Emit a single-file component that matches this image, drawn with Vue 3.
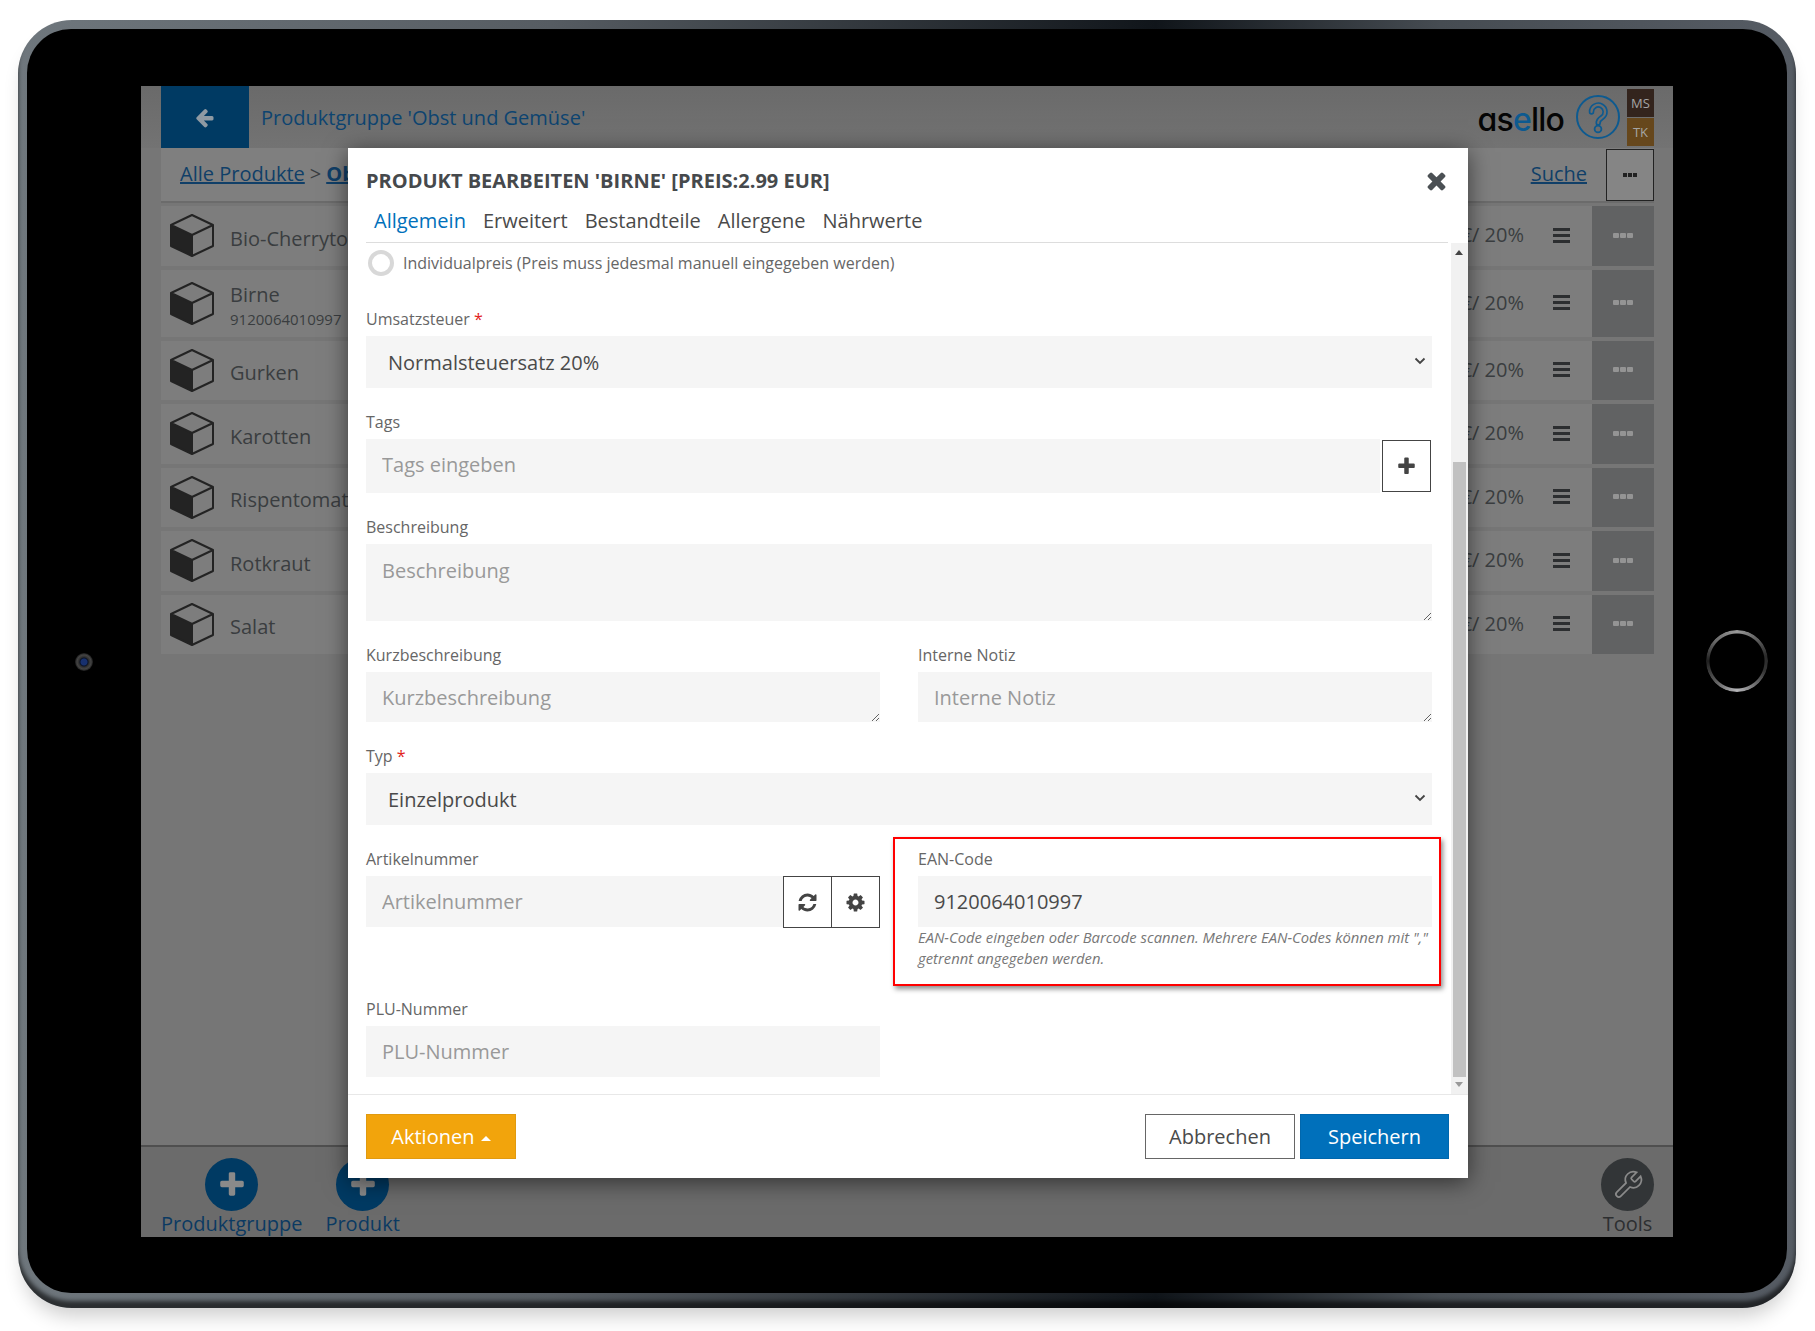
<template>
  <div class="page">
    <div class="device">
      <div class="bezel">
        <span class="camera"></span>
        <span class="home"></span>

        <div class="screen">
          <header class="top">
            <a class="back">
              <svg viewBox="0 0 1792 1792"><path :d="icons.arrow" /></svg>
            </a>
            <div class="top-title">Produktgruppe 'Obst und Gemüse'</div>
            <div class="logo">as<span>e</span>llo</div>
            <svg class="help" viewBox="0 0 44 44">
              <circle cx="22" cy="22" r="21" fill="none" stroke="#0d5a90" stroke-width="2" />
              <path d="M15.5 17a6.8 6.8 0 1 1 10.4 5.6c-2.6 1.6-3.7 3-3.7 5.4" fill="none" stroke="#0d5a90" stroke-width="5.5" stroke-linecap="round" />
              <path d="M15.5 17a6.8 6.8 0 1 1 10.4 5.6c-2.6 1.6-3.7 3-3.7 5.4" fill="none" stroke="#6d6d6d" stroke-width="2.2" stroke-linecap="round" />
              <circle cx="22" cy="34" r="3.4" fill="#6d6d6d" stroke="#0d5a90" stroke-width="1.8" />
            </svg>
            <div class="users">
              <span class="ms">MS</span>
              <span class="tk">TK</span>
            </div>
          </header>

          <div class="crumb">
            <a class="link">Alle Produkte</a>
            <span class="sep">&gt;</span>
            <a class="link strong">Obst und Gemüse</a>
            <a class="link search">Suche</a>
            <button class="more"><i></i><i></i><i></i></button>
          </div>

          <div class="list">
            <div v-for="p in products" :key="p.name" class="row" :class="{ tall: p.code }">
              <svg class="cube" viewBox="0 0 44 43">
                <path d="M1 11 22 21V42L1 32Z" fill="#232323" />
                <path d="M22 1 43 11V32L22 42 1 32V11ZM1 11 22 21 43 11M22 21V42" fill="none" stroke="#232323" stroke-width="2" stroke-linejoin="round" />
              </svg>
              <div class="row-name">
                <div>{{ p.name }}</div>
                <small v-if="p.code">{{ p.code }}</small>
              </div>
              <div class="row-price">{{ p.price }} €/ 20%</div>
              <div class="row-bars"><i></i><i></i><i></i></div>
              <div class="row-action"><i></i><i></i><i></i></div>
            </div>
          </div>

          <footer class="bottom">
            <div class="tool">
              <span class="round">
                <svg viewBox="0 0 1792 1792"><path :d="icons.plus" /></svg>
              </span>
              <span>Produktgruppe</span>
            </div>
            <div class="tool">
              <span class="round">
                <svg viewBox="0 0 1792 1792"><path :d="icons.plus" /></svg>
              </span>
              <span>Produkt</span>
            </div>
            <div class="tool dark">
              <span class="round">
                <svg class="wrench" viewBox="0 0 24 24"><path d="M14.7 6.3a1 1 0 0 0 0 1.4l1.6 1.6a1 1 0 0 0 1.4 0l3.77-3.77a6 6 0 0 1-7.94 7.94l-6.91 6.91a2.12 2.12 0 0 1-3-3l6.91-6.91a6 6 0 0 1 7.94-7.94l-3.76 3.76z" /></svg>
              </span>
              <span>Tools</span>
            </div>
          </footer>

          <div class="modal">
            <div class="modal-head">
              <h3>PRODUKT BEARBEITEN 'BIRNE' [PREIS:2.99 EUR]</h3>
              <svg class="close" viewBox="0 0 1792 1792"><path :d="icons.times" /></svg>
            </div>
            <nav class="tabs">
              <a v-for="(t, i) in tabs" :key="t" :class="{ active: i === 0 }">{{ t }}</a>
            </nav>

            <div class="modal-body">
              <form class="form" @submit.prevent>
                <div class="radio-row">
                  <span class="radio"></span>
                  <span>Individualpreis (Preis muss jedesmal manuell eingegeben werden)</span>
                </div>

                <div class="field">
                  <label>Umsatzsteuer <b>*</b></label>
                  <div class="select">
                    <select><option>Normalsteuersatz 20%</option></select>
                    <svg viewBox="0 0 12 8"><path d="M1.5 1.5 6 6l4.5-4.5" /></svg>
                  </div>
                </div>

                <div class="field">
                  <label>Tags</label>
                  <div class="group tags">
                    <input placeholder="Tags eingeben" />
                    <button class="addon wide">
                      <svg viewBox="0 0 1792 1792"><path :d="icons.plus" /></svg>
                    </button>
                  </div>
                </div>

                <div class="field">
                  <label>Beschreibung</label>
                  <textarea class="big" placeholder="Beschreibung"></textarea>
                </div>

                <div class="cols">
                  <div class="field">
                    <label>Kurzbeschreibung</label>
                    <textarea placeholder="Kurzbeschreibung"></textarea>
                  </div>
                  <div class="field">
                    <label>Interne Notiz</label>
                    <textarea placeholder="Interne Notiz"></textarea>
                  </div>
                </div>

                <div class="field">
                  <label>Typ <b>*</b></label>
                  <div class="select">
                    <select><option>Einzelprodukt</option></select>
                    <svg viewBox="0 0 12 8"><path d="M1.5 1.5 6 6l4.5-4.5" /></svg>
                  </div>
                </div>

                <div class="cols">
                  <div class="field">
                    <label>Artikelnummer</label>
                    <div class="group">
                      <input placeholder="Artikelnummer" />
                      <button class="addon">
                        <svg viewBox="0 0 1792 1792"><path :d="icons.refresh" /></svg>
                      </button>
                      <button class="addon next">
                        <svg viewBox="0 0 1792 1792"><path :d="icons.cog" /></svg>
                      </button>
                    </div>
                  </div>
                  <div class="field ean">
                    <span class="mark"></span>
                    <label>EAN-Code</label>
                    <input value="9120064010997" />
                    <p class="hint">EAN-Code eingeben oder Barcode scannen. Mehrere EAN-Codes können mit "," getrennt angegeben werden.</p>
                  </div>
                </div>

                <div class="cols plu">
                  <div class="field">
                    <label>PLU-Nummer</label>
                    <input placeholder="PLU-Nummer" />
                  </div>
                </div>
              </form>

              <div class="scrollbar">
                <i class="up"></i>
                <span class="thumb"></span>
                <i class="down"></i>
              </div>
            </div>

            <div class="modal-foot">
              <button class="btn orange">Aktionen <i class="caret"></i></button>
              <button class="btn plain">Abbrechen</button>
              <button class="btn blue">Speichern</button>
            </div>
          </div>
        </div>
      </div>
    </div>
  </div>
</template>

<script setup>
const products = [
  { name: 'Bio-Cherrytomaten', price: '3.49' },
  { name: 'Birne', code: '9120064010997', price: '2.99' },
  { name: 'Gurken', price: '1.29' },
  { name: 'Karotten', price: '1.49' },
  { name: 'Rispentomaten', price: '2.79' },
  { name: 'Rotkraut', price: '1.19' },
  { name: 'Salat', price: '0.99' }
]

const tabs = ['Allgemein', 'Erweitert', 'Bestandteile', 'Allergene', 'Nährwerte']

const icons = {
  arrow: 'M1664 896v128q0 53-32.5 90.5t-84.5 37.5h-704l293 294q38 36 38 90t-38 90l-75 76q-37 37-90 37-52 0-91-37l-651-652q-37-37-37-90 0-52 37-91l651-650q38-38 91-38 52 0 90 38l75 74q38 38 38 91t-38 91l-293 293h704q52 0 84.5 37.5t32.5 90.5z',
  plus: 'M1600 736v192q0 40-28 68t-68 28h-416v416q0 40-28 68t-68 28h-192q-40 0-68-28t-28-68v-416h-416q-40 0-68-28t-28-68v-192q0-40 28-68t68-28h416v-416q0-40 28-68t68-28h192q40 0 68 28t28 68v416h416q40 0 68 28t28 68z',
  times: 'M1490 1322q0 40-28 68l-136 136q-28 28-68 28t-68-28l-294-294-294 294q-28 28-68 28t-68-28l-136-136q-28-28-28-68t28-68l294-294-294-294q-28-28-28-68t28-68l136-136q28-28 68-28t68 28l294 294 294-294q28-28 68-28t68 28l136 136q28 28 28 68t-28 68l-294 294 294 294q28 28 28 68z',
  refresh: 'M1639 1056q0 5-1 7-64 268-268 434.5t-478 166.5q-146 0-282.5-55t-243.5-157l-129 129q-19 19-45 19t-45-19-19-45v-448q0-26 19-45t45-19h448q26 0 45 19t19 45-19 45l-137 137q71 66 161 102t187 36q134 0 250-65t186-179q11-17 53-117 8-23 30-23h192q13 0 22.5 9.5t9.5 22.5zm25-800v448q0 26-19 45t-45 19h-448q-26 0-45-19t-19-45 19-45l138-138q-148-137-349-137-134 0-250 65t-186 179q-11 17-53 117-8 23-30 23h-199q-13 0-22.5-9.5t-9.5-22.5v-7q65-268 270-434.5t480-166.5q146 0 284 55.5t245 156.5l130-129q19-19 45-19t45 19 19 45z',
  cog: 'M1152 896q0-106-75-181t-181-75-181 75-75 181 75 181 181 75 181-75 75-181zm512-109v222q0 12-8 23t-20 13l-185 28q-19 54-39 91 35 50 107 138 10 12 10 25t-9 23q-27 37-99 108t-94 71q-12 0-26-9l-138-108q-44 23-91 38-16 136-29 186-7 28-36 28h-222q-14 0-24.5-8.5t-11.5-21.5l-28-184q-49-16-90-37l-141 107q-10 9-25 9-14 0-25-11-126-114-165-168-7-10-7-23 0-12 8-23 15-21 51-66.5t54-70.5q-27-50-41-99l-183-27q-13-2-21-12.5t-8-23.5v-222q0-12 8-23t19-13l186-28q14-46 39-92-40-57-107-138-10-12-10-24 0-10 9-23 26-36 98.5-107.5t94.5-71.5q13 0 26 10l138 107q44-23 91-38 16-136 29-186 7-28 36-28h222q14 0 24.5 8.5t11.5 21.5l28 184q49 16 90 37l142-107q9-9 24-9 13 0 25 10 129 119 165 170 7 8 7 22 0 12-8 23-15 21-51 66.5t-54 70.5q26 50 41 98l183 28q13 2 21 12.5t8 23.5z'
}
</script>

<style>
html, body {
  background: #fff;
  overflow: hidden;
}
</style>

<style scoped>
.page {
  width: 1815px;
  height: 1331px;
  padding: 20px 19px 23px 18px;
  box-sizing: border-box;
  background: #fff;
  font-family: "Open Sans", sans-serif;
  overflow: hidden;
}

.device {
  height: 1288px;
  padding: 9px 9px 15px;
  box-sizing: border-box;
  border-radius: 54px;
  background: linear-gradient(90deg, #6f777d 0, #565c62 30%, #10151a 64%, #464c52 80%, #565c64 100%);
  box-shadow: inset 0 -7px 4px rgba(0, 0, 0, .6), 0 14px 20px -6px rgba(0, 0, 0, .2);
}

.bezel {
  position: relative;
  height: 100%;
  padding: 57px 114px 56px;
  box-sizing: border-box;
  border-radius: 44px;
  background: #000;
}

.camera {
  position: absolute;
  left: 48px;
  top: 624px;
  width: 18px;
  height: 18px;
  border-radius: 50%;
  background: radial-gradient(circle, #17306e 0 3px, #0a1226 4px, #2e2e2e 5px, #444 7px, #1a1a1a 9px);
}

.home {
  position: absolute;
  left: 1679px;
  top: 601px;
  width: 62px;
  height: 62px;
  border-radius: 50%;
  background: conic-gradient(#9a9a9a, #2a2a2a 80deg, #333 110deg, #b5b5b8 180deg, #555 230deg, #1f1f1f 270deg, #666 310deg, #9a9a9a);
  -webkit-mask: radial-gradient(closest-side, transparent 27px, #000 28px);
  mask: radial-gradient(closest-side, transparent 27px, #000 28px);
}

/* screen, dimmed by the dialog */
.screen {
  position: relative;
  display: flex;
  flex-direction: column;
  height: 100%;
  background: #767676;
  color: #3a3d40;
  overflow: hidden;
}

.top {
  display: flex;
  align-items: center;
  flex: 0 0 62px;
  padding: 0 19px 0 20px;
  background: linear-gradient(#6a6a6a, #737373);
}

.back {
  display: flex;
  align-items: center;
  justify-content: center;
  width: 88px;
  height: 62px;
  background: #003a63;
}

.back svg {
  width: 21px;
  margin-left: -2px;
  fill: #8f9aa3;
}

.top-title {
  flex: 1;
  margin-left: 12px;
  font-size: 20px;
  color: #0d4470;
}

.logo {
  margin-right: 12px;
  padding-top: 5px;
  font-family: Inter, sans-serif;
  font-feature-settings: "cv11";
  font-size: 32px;
  font-weight: 500;
  letter-spacing: -.8px;
  color: #050505;
}

.logo span {
  color: #0d5a90;
}

.help {
  width: 44px;
  height: 44px;
  margin-right: 7px;
}

.users {
  display: flex;
  flex-direction: column;
  gap: 1px;
  width: 27px;
  font-size: 13px;
  text-align: center;
  color: #a5a5a5;
}

.users span {
  height: 28px;
  line-height: 28px;
}

.ms { background: #33241d; }
.tk { background: #66471c; }

.crumb {
  display: flex;
  align-items: center;
  flex: 0 0 53px;
  margin: 0 19px 0 20px;
  padding-left: 19px;
  border-bottom: 2px solid #6b6b6b;
  background: #7f7f7f;
  font-size: 20px;
}

.crumb .link,
.crumb .sep {
  padding-bottom: 2px;
}

.link {
  color: #103f68;
  text-decoration: underline;
}

.sep {
  margin: 0 5px;
}

.strong {
  font-weight: 700;
}

.search {
  margin-left: auto;
  margin-right: 19px;
}

.more {
  display: flex;
  align-items: center;
  justify-content: center;
  gap: 1px;
  width: 48px;
  height: 52px;
  padding: 0;
  border: 1px solid #222;
  background: #858585;
}

.more i {
  width: 4px;
  height: 4px;
  background: #222;
}

.list {
  flex: 1;
  display: flex;
  flex-direction: column;
  gap: 4px;
  margin: 3px 19px 0 20px;
}

.row {
  display: flex;
  align-items: center;
  height: 59.5px;
  padding-left: 9px;
  background: #7d7d7d;
  font-size: 20px;
}

.row.tall {
  height: 67px;
}

.cube {
  flex: none;
  width: 44px;
  height: 43px;
}

.row-name {
  flex: 1;
  margin-left: 16px;
  padding-top: 6px;
  line-height: 26px;
}

.row-name small {
  display: block;
  font-size: 15px;
  line-height: 22px;
}

.row-price {
  margin-right: 29px;
  padding-bottom: 2px;
}

.row-bars {
  display: flex;
  flex-direction: column;
  gap: 3px;
  width: 17px;
  margin-right: 22px;
  padding-bottom: 1px;
}

.row-bars i {
  height: 3px;
  background: #2c2e30;
}

.row-action {
  display: flex;
  align-self: stretch;
  align-items: center;
  justify-content: center;
  gap: 1px;
  width: 62px;
  padding-bottom: 1px;
  background: #616263;
}

.row-action i {
  width: 6px;
  height: 5px;
  border-radius: 1px;
  background: #949494;
}

.bottom {
  display: flex;
  align-items: flex-start;
  gap: 23px;
  flex: 0 0 92px;
  padding: 11px 19px 0 20px;
  box-sizing: border-box;
  border-top: 2px solid #4f4f4f;
  background: #6b6b6b;
  font-size: 20px;
  line-height: 26px;
  color: #0b3a62;
}

.tool {
  display: flex;
  flex-direction: column;
  align-items: center;
}

.tool.dark {
  margin-left: auto;
  color: #2d2f31;
}

.round {
  display: flex;
  align-items: center;
  justify-content: center;
  width: 53px;
  height: 53px;
  border-radius: 50%;
  background: #003a63;
}

.round svg {
  width: 30px;
  fill: #8a8a8a;
}

.dark .round {
  background: #323537;
}

.round svg.wrench {
  width: 32px;
  fill: none;
  stroke: #8a8a8a;
  stroke-width: 1.3;
}

/* dialog */
.modal {
  position: absolute;
  left: 207px;
  top: 62px;
  display: flex;
  flex-direction: column;
  width: 1120px;
  height: 1030px;
  background: #fff;
  box-shadow: 0 4px 22px rgba(0, 0, 0, .55);
  color: #4a4a4a;
}

.modal-head {
  display: flex;
  align-items: center;
  justify-content: space-between;
  height: 58px;
  padding: 6px 18px 0 18px;
  box-sizing: border-box;
}

.modal-head h3 {
  margin: 0;
  font-size: 20px;
  font-weight: 700;
  color: #46494c;
}

.close {
  width: 27px;
  fill: #4b5054;
}

.tabs {
  display: flex;
  gap: 17px;
  height: 36px;
  margin: 0 20px 0 18px;
  padding-left: 8px;
  border-bottom: 1px solid #ddd;
  font-size: 20px;
  line-height: 30px;
}

.tabs .active {
  color: #0070bb;
}

.modal-body {
  display: flex;
  flex: 1;
  min-height: 0;
}

.form {
  flex: 1;
  padding: 0 19px 0 18px;
  font-size: 16px;
}

.radio-row {
  display: flex;
  align-items: center;
  gap: 9px;
  height: 40px;
  padding-left: 2px;
  color: #666;
}

.radio {
  width: 26px;
  height: 26px;
  box-sizing: border-box;
  border: 4px solid #d8d8d8;
  border-radius: 50%;
}

.field {
  margin-top: 23px;
}

.radio-row + .field {
  margin-top: 25px;
}

.field label {
  display: block;
  height: 22px;
  margin-bottom: 6px;
  line-height: 22px;
  color: #666;
}

.field label b {
  font-weight: 400;
  color: #e2231a;
}

.select {
  position: relative;
}

.select svg {
  position: absolute;
  right: 6px;
  top: 21px;
  width: 12px;
  height: 8px;
  fill: none;
  stroke: #444;
  stroke-width: 1.8;
}

select,
input,
textarea {
  display: block;
  width: 100%;
  box-sizing: border-box;
  border: 0;
  outline: 0;
  border-radius: 0;
  background: #f5f5f5;
  font-family: inherit;
  font-size: 20px;
  color: #4a4a4a;
}

select {
  height: 52px;
  padding: 0 16px 0 22px;
  appearance: none;
  -webkit-appearance: none;
}

input {
  height: 52px;
  padding: 0 16px;
}

textarea {
  height: 50px;
  padding: 12px 16px 6px;
  resize: vertical;
  line-height: 27px;
}

textarea.big {
  height: 77px;
  padding-top: 13px;
}

::placeholder {
  color: #999;
  opacity: 1;
}

.group {
  display: flex;
}

.group input {
  flex: 1;
  min-width: 0;
}

.group.tags input {
  height: 54px;
  padding-bottom: 4px;
}

.addon {
  display: flex;
  align-items: center;
  justify-content: center;
  flex: none;
  width: 49px;
  height: 52px;
  padding: 0;
  border: 1px solid #444;
  background: #fff;
}

.addon.next {
  margin-left: -1px;
}

.addon.wide {
  align-self: center;
  margin: 0 1px 0 2px;
}

.addon svg {
  width: 21px;
  fill: #444;
}

.cols {
  display: grid;
  grid-template-columns: 514px 514px;
  column-gap: 38px;
}

.cols input {
  height: 51px;
}

.plu {
  margin-top: 29px;
}

.plu .field {
  margin-top: 0;
}

.ean {
  position: relative;
}

.mark {
  position: absolute;
  left: -25px;
  top: -11px;
  width: 548px;
  height: 149px;
  box-sizing: border-box;
  border: 2px solid #f00;
  box-shadow: 2px 3px 5px rgba(0, 0, 0, .45);
  pointer-events: none;
}

.hint {
  margin: 0;
  font-size: 14.8px;
  font-style: italic;
  line-height: 21px;
  color: #777;
}

.scrollbar {
  position: relative;
  flex: none;
  width: 17px;
  background: #f1f1f1;
}

.thumb {
  position: absolute;
  left: 2px;
  top: 219px;
  width: 13px;
  height: 615px;
  background: #c1c1c1;
}

.up,
.down {
  position: absolute;
  left: 4px;
  border-left: 4.5px solid transparent;
  border-right: 4.5px solid transparent;
}

.up {
  top: 7px;
  border-bottom: 5px solid #444;
}

.down {
  bottom: 7px;
  border-top: 5px solid #999;
}

.modal-foot {
  display: flex;
  align-items: center;
  gap: 5px;
  height: 84px;
  padding: 0 19px 0 18px;
  box-sizing: border-box;
  border-top: 1px solid #e8e8e8;
}

.btn {
  width: 150px;
  height: 45px;
  padding: 0;
  border: 1px solid transparent;
  font-family: inherit;
  font-size: 20px;
}

.orange {
  margin-right: auto;
  background: #f2a40c;
  border-color: #e09a10;
  color: #fff;
}

.caret {
  display: inline-block;
  margin-left: 1px;
  vertical-align: middle;
  border-left: 5px solid transparent;
  border-right: 5px solid transparent;
  border-bottom: 5px solid #fff;
}

.plain {
  background: #fff;
  border-color: #666;
  color: #4a4a4a;
}

.blue {
  width: 149px;
  background: #0070bb;
  border-color: #0067ad;
  color: #fff;
}
</style>
